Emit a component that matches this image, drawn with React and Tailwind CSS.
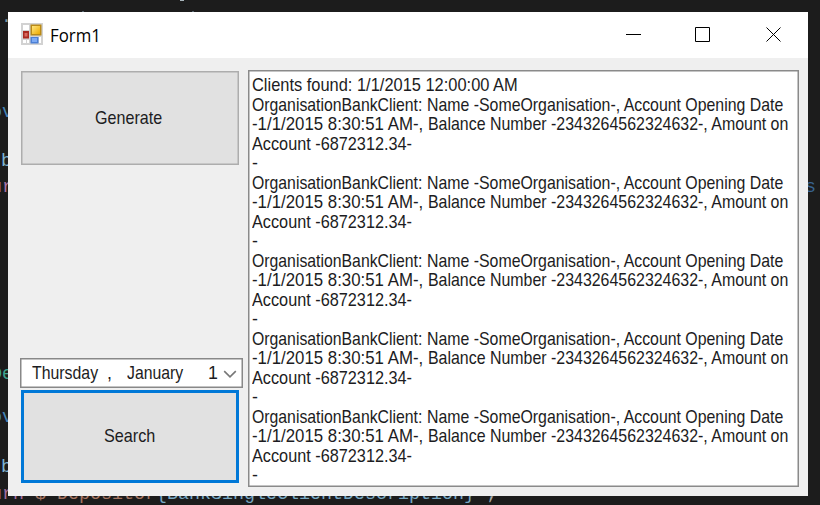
import { useLayoutEffect, useRef, useState } from "react";

// Text condensed or widened to an exact run width.
function Fit({ width, children }) {
  const ref = useRef(null);
  const [scale, setScale] = useState(1);
  useLayoutEffect(() => {
    setScale(width / ref.current.offsetWidth);
  }, [width]);
  return (
    <span className="block whitespace-pre" style={{ width }}>
      <span ref={ref} className="inline-block origin-left" style={{ transform: `scaleX(${scale})` }}>
        {children}
      </span>
    </span>
  );
}

function Entry() {
  return (
    <div>
      <div className="flex">
        <Fit width={175}>OrganisationBankClient: </Fit>
        <Fit width={356}>Name -SomeOrganisation-, Account Opening Date</Fit>
      </div>
      <div className="flex">
        <Fit width={176}>-1/1/2015 8:30:51 AM-, </Fit>
        <Fit width={360}>Balance Number -2343264562324632-, Amount on</Fit>
      </div>
      <Fit width={160}>Account -6872312.34-</Fit>
      <Fit width={6}>-</Fit>
    </div>
  );
}

function FormIcon() {
  return (
    <svg className="mb-0.5" width="22" height="22" viewBox="0 0 22 22">
      <defs>
        <linearGradient id="gold" x1="0" y1="0" x2="1" y2="1">
          <stop offset="0" stopColor="#ffe680" />
          <stop offset="1" stopColor="#edaa00" />
        </linearGradient>
      </defs>
      <rect width="22" height="22" fill="#d2d2d2" />
      <rect x="2" y="2" width="6" height="5" fill="#fff" />
      <rect x="2" y="17" width="3" height="3" fill="#fff" />
      <rect x="6" y="17" width="2" height="3" fill="#fff" />
      <rect x="18" y="14" width="2" height="6" fill="#fff" />
      <rect x="9.5" y="1.5" width="11" height="11" fill="#b98a18" />
      <rect x="11" y="3" width="8" height="8" fill="url(#gold)" />
      <rect x="2" y="8" width="6" height="7.5" fill="#a92a20" />
      <rect x="3.5" y="10" width="3" height="3.5" fill="#d8695e" />
      <rect x="9.5" y="14" width="8" height="6.5" fill="#4c80d6" />
      <rect x="11" y="15" width="5" height="4" fill="#7caaf4" />
    </svg>
  );
}

function EditorBackdrop() {
  const line = "absolute whitespace-pre";
  return (
    <div className="absolute inset-0 overflow-hidden font-['Liberation_Mono','DejaVu_Sans_Mono',monospace] text-[18.33px] leading-[26px]">
      <span className={`${line} left-[1px] top-[5px] text-[#7a96a5]`}>.</span>
      <span className="absolute left-[180px] top-0 h-px w-[4px] bg-[#a8b4ba]" />
      <span className="absolute left-[82px] top-[11px] h-px w-[2px] bg-[#55636b]" />
      <span className="absolute left-[192px] top-[11px] h-px w-[2px] bg-[#55636b]" />
      <span className={`${line} left-[-9px] top-[100px] text-[#4684b4]`}>ov</span>
      <span className={`${line} left-[1px] top-[149px] text-[#7fb4d0]`}>b</span>
      <span className={`${line} left-[-9px] top-[175px] text-[#a873a5]`}>ur</span>
      <span className={`${line} left-[805px] top-[175px] text-[#386491]`}>s</span>
      <span className={`${line} left-[-9px] top-[362px] text-[#3fa38e]`}>De</span>
      <span className={`${line} left-[-9px] top-[405px] text-[#4684b4]`}>ov</span>
      <span className={`${line} left-[1px] top-[455px] text-[#7fb4d0]`}>b</span>
      <span className={`${line} left-[-42px] top-[482px] text-[#78a9c4]`}>
        <span className="text-[#a06d9c]">return</span>
        <span className="text-[#a57561]"> $"Depositor</span>
        {"{BankSingleClientDescription}"}
        <span className="text-[#a57561]">"</span>
        <span className="text-[#adadad]">;</span>
      </span>
    </div>
  );
}

export default function App() {
  return (
    <div className="relative h-[505px] w-[820px] overflow-hidden bg-[#1c1c1c] pl-2 pt-3 font-['Liberation_Sans',Arial,sans-serif] text-[17.8px] text-[#1c1c22]">
      <EditorBackdrop />
      <div className="relative flex h-[484px] w-[800px] flex-col bg-[#efefef]">
        <header className="flex h-[46px] shrink-0 items-center bg-white pl-[13px] text-black">
          <FormIcon />
          <div className="ml-[7px] pt-px font-['Open_Sans','Noto_Sans',sans-serif] text-[17.5px] leading-none">
            <Fit width={51}>Form1</Fit>
          </div>
          <svg className="ml-auto mr-[26px] shrink-0" width="157" height="17" viewBox="0 0 157 17" fill="none" stroke="#000">
            <path d="M1 7.5H16" />
            <path d="M70.5 0.5h14v14h-14z" />
            <path d="M141.5 0.5l14 14M155.5 0.5l-14 14" />
          </svg>
        </header>
        <main className="flex flex-1">
          <div className="flex w-[240px] flex-col pl-3 pt-[13px]">
            <button className="ml-[1px] flex h-[94px] w-[218px] items-center justify-center border border-[#adadad] bg-[#e1e1e1] pr-[3px] shadow-[inset_0_0_0_0.5px_#adadad]">
              <Fit width={67}>Generate</Fit>
            </button>
            <div className="mt-[193px] flex h-[30px] w-[223px] items-center border border-[#888] bg-white pl-[11px] shadow-[inset_0_0_0_0.5px_#888]">
              <Fit width={66}>Thursday</Fit>
              <span className="ml-[9px] w-[20px]">,</span>
              <Fit width={56}>January</Fit>
              <span className="ml-[25px]">1</span>
              <svg className="ml-[5px] mt-[3px] shrink-0" width="14" height="9" viewBox="0 0 14 9" fill="none" stroke="#777" strokeWidth="1.6">
                <path d="M1.2 1.2l5.8 5.6 5.8-5.6" />
              </svg>
            </div>
            <button className="ml-[1px] mt-[2px] flex h-[93px] w-[218px] items-center justify-center border-[3px] border-[#0078d7] bg-[#e1e1e1] pr-0.5">
              <Fit width={51}>Search</Fit>
            </button>
          </div>
          <div className="mt-3 h-[417px] w-[551px] border border-[#8a8a8a] bg-white pl-[3px] pt-[5px] leading-[19.5px] shadow-[inset_0_0_0_0.5px_#8a8a8a]">
            <Fit width={266}>Clients found: 1/1/2015 12:00:00 AM</Fit>
            <Entry />
            <Entry />
            <Entry />
            <Entry />
            <Entry />
          </div>
        </main>
      </div>
    </div>
  );
}
